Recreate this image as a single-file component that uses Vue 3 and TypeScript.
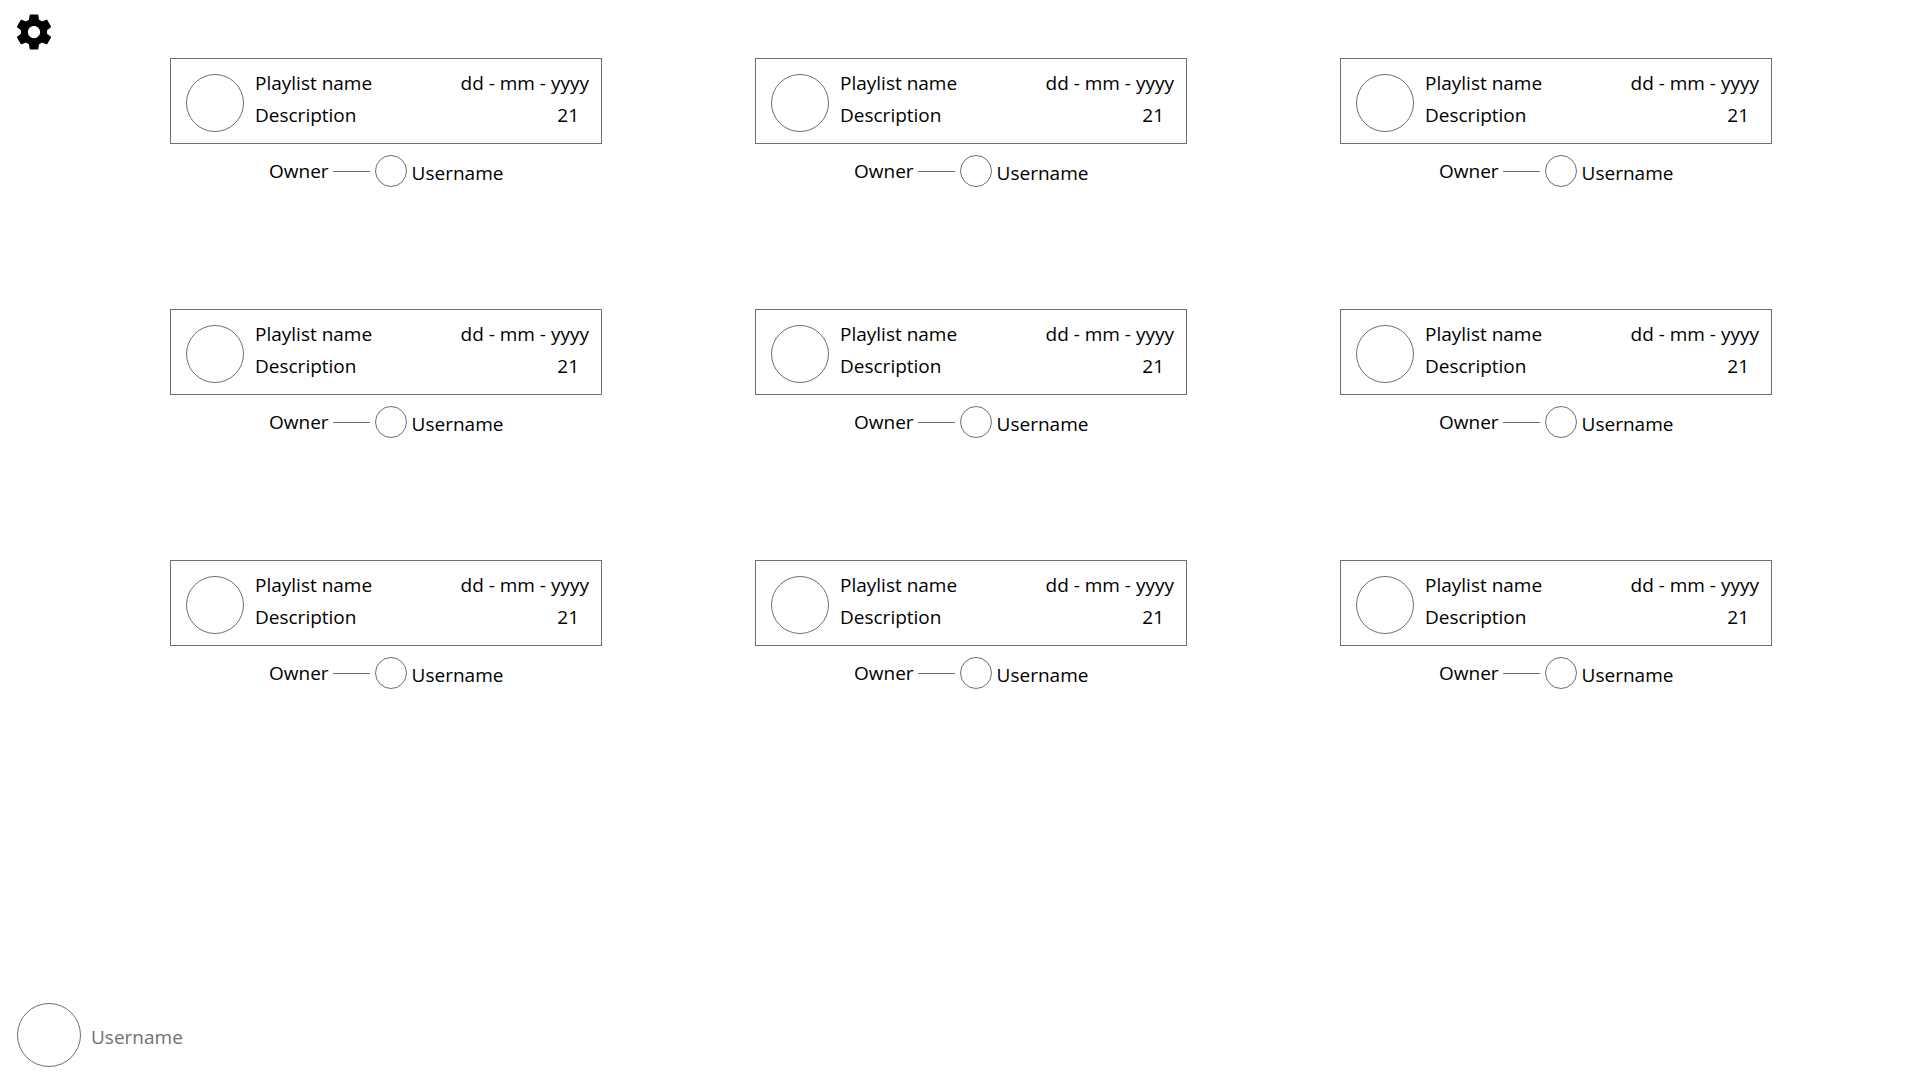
<script setup lang="ts">
interface Playlist {
  id: number
  name: string
  description: string
  date: string
  tracks: number
  owner: string
}

const playlists: Playlist[] = Array.from({ length: 9 }, (_, index) => ({
  id: index + 1,
  name: 'Playlist name',
  description: 'Description',
  date: 'dd - mm - yyyy',
  tracks: 21,
  owner: 'Username',
}))

const currentUser = 'Username'
</script>

<template>
  <div class="page">
    <header class="toolbar">
      <button class="settings" type="button" aria-label="Settings">
        <svg viewBox="0 0 24 24" width="42" height="42" aria-hidden="true">
          <path
            d="M19.43 12.98c.04-.32.07-.64.07-.98s-.03-.66-.07-.98l2.11-1.65c.19-.15.24-.42.12-.64l-2-3.46c-.12-.22-.39-.3-.61-.22l-2.49 1c-.52-.4-1.08-.73-1.69-.98l-.38-2.65C14.46 2.18 14.25 2 14 2h-4c-.25 0-.46.18-.49.42l-.38 2.65c-.61.25-1.17.59-1.69.98l-2.49-1c-.23-.09-.49 0-.61.22l-2 3.46c-.13.22-.07.49.12.64l2.11 1.65c-.04.32-.07.65-.07.98s.03.66.07.98l-2.11 1.65c-.19.15-.24.42-.12.64l2 3.46c.12.22.39.3.61.22l2.49-1c.52.4 1.08.73 1.69.98l.38 2.65c.03.24.24.42.49.42h4c.25 0 .46-.18.49-.42l.38-2.65c.61-.25 1.17-.59 1.69-.98l2.49 1c.23.09.49 0 .61-.22l2-3.46c.12-.22.07-.49-.12-.64l-2.11-1.65zM12 15.5c-1.93 0-3.5-1.57-3.5-3.5s1.57-3.5 3.5-3.5 3.5 1.57 3.5 3.5-1.57 3.5-3.5 3.5z"
          />
        </svg>
      </button>
    </header>

    <main class="playlists">
      <article v-for="playlist in playlists" :key="playlist.id" class="playlist">
        <div class="card">
          <span class="avatar cover"></span>
          <div class="details">
            <span>{{ playlist.name }}</span>
            <span>{{ playlist.description }}</span>
          </div>
          <div class="meta">
            <span>{{ playlist.date }}</span>
            <span class="tracks">{{ playlist.tracks }}</span>
          </div>
        </div>
        <div class="owner">
          <span>Owner</span>
          <span class="connector"></span>
          <span class="avatar owner-avatar"></span>
          <span class="owner-name">{{ playlist.owner }}</span>
        </div>
      </article>
    </main>

    <footer class="account">
      <span class="avatar account-avatar"></span>
      <span class="account-name">{{ currentUser }}</span>
    </footer>
  </div>
</template>

<style>
body {
  margin: 0;
  background: #fff;
}
</style>

<style scoped>
.page {
  display: flex;
  flex-direction: column;
  box-sizing: border-box;
  min-height: 100vh;
  font-family: "Segoe UI", "Open Sans", "Noto Sans", sans-serif;
  font-size: 19px;
  line-height: 32px;
  color: #000;
}

.toolbar {
  display: flex;
  padding: 11px 13px 5px;
}

.settings {
  display: flex;
  padding: 0;
  border: 0;
  background: none;
  color: inherit;
  cursor: pointer;
}

.settings svg {
  fill: currentColor;
}

.playlists {
  display: grid;
  grid-template-columns: repeat(3, 1fr);
  gap: 122px 153px;
  padding: 0 148px 0 170px;
}

.card {
  display: flex;
  box-sizing: border-box;
  padding: 8px 12px 11px 15px;
  border: 1px solid #707070;
}

.avatar {
  flex: none;
  box-sizing: border-box;
  border: 1px solid #707070;
  border-radius: 50%;
}

.cover {
  width: 58px;
  height: 58px;
  margin: 7px 11px 0 0;
}

.details,
.meta {
  display: flex;
  flex-direction: column;
}

.meta {
  align-items: flex-end;
  margin-left: auto;
}

.tracks {
  padding-right: 10px;
}

.owner {
  display: flex;
  align-items: center;
  padding: 11px 0 0 99px;
}

.connector {
  width: 37px;
  margin: 0 5px 0 4px;
  border-top: 1px solid #707070;
}

.owner-avatar {
  width: 32px;
  height: 32px;
}

.owner-name {
  align-self: flex-end;
  margin-left: 5px;
  line-height: 28px;
}

.account {
  display: flex;
  align-items: center;
  gap: 10px;
  margin-top: auto;
  padding: 0 17px 13px;
  color: #707070;
}

.account-avatar {
  width: 64px;
  height: 64px;
}

.account-name {
  padding-top: 4px;
}
</style>
